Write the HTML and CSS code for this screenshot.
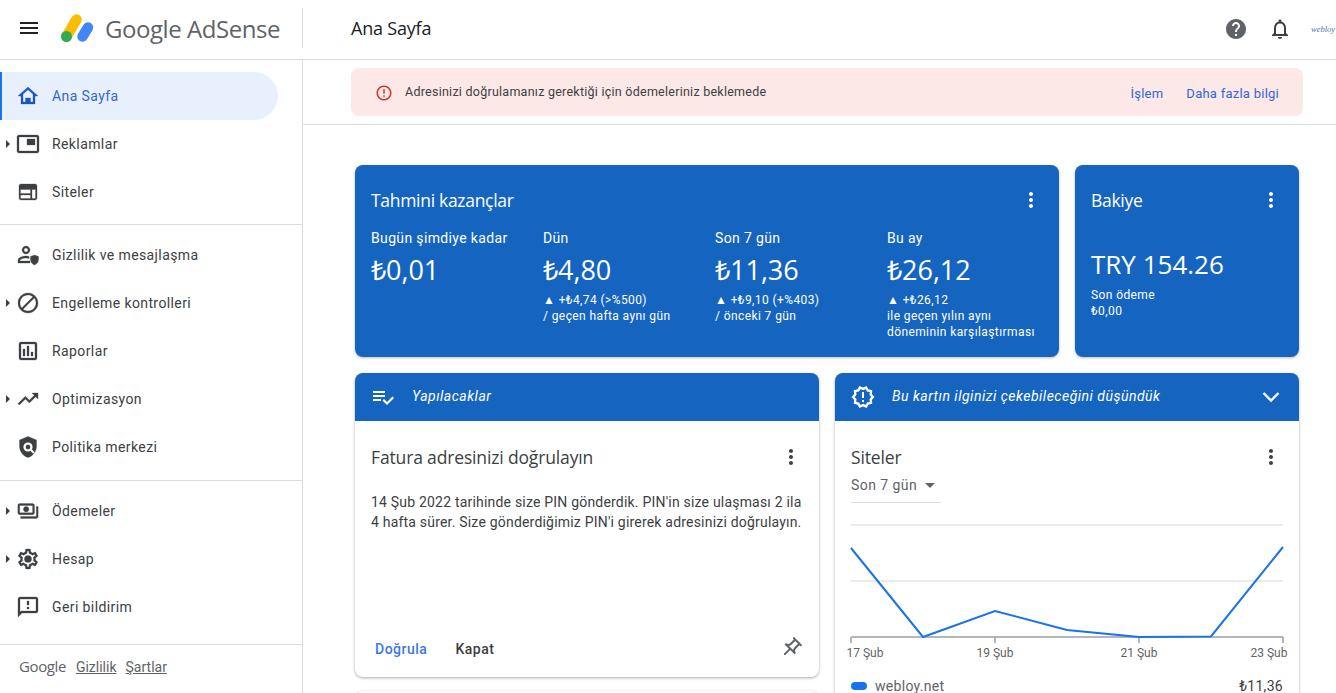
FILE: index.html
```html
<!DOCTYPE html>
<html lang="tr">
<head>
    <meta charset="UTF-8">
    <meta name="viewport" content="width=device-width, initial-scale=1.0">
    <title>Google AdSense</title>
    <link rel="stylesheet" href="styles.css">
</head>
<body>
    <header class="topbar">
        <div class="brand">
            <svg class="icon menu-icon" viewBox="0 0 24 24"><path d="M3 18h18v-2H3v2zm0-5h18v-2H3v2zm0-7v2h18V6H3z"/></svg>
            <svg class="logo" viewBox="58 8 38 36" width="38" height="36">
                <path d="M66.500 34.500 L76.500 17.500" stroke="#fbbc04" stroke-width="10.500" stroke-linecap="round" fill="none"/>
                <path d="M82.500 34.500 L88 25.500" stroke="#4285f4" stroke-width="10.500" stroke-linecap="round" fill="none"/>
                <circle cx="66.500" cy="34.500" r="5.500" fill="#34a853"/>
            </svg>
            <span class="brand-name">Google AdSense</span>
        </div>
        <div class="page-title">Ana Sayfa</div>
        <div class="top-actions">
            <svg class="icon help-icon" viewBox="0 0 24 24"><path d="M12 2C6.48 2 2 6.48 2 12s4.48 10 10 10 10-4.48 10-10S17.52 2 12 2zm1 17h-2v-2h2v2zm2.07-7.75l-.9.92C13.45 12.9 13 13.5 13 15h-2v-.5c0-1.1.45-2.1 1.17-2.83l1.24-1.26c.37-.36.59-.86.59-1.41 0-1.1-.9-2-2-2s-2 .9-2 2H8c0-2.21 1.79-4 4-4s4 1.79 4 4c0 .88-.36 1.68-.93 2.25z"/></svg>
            <svg class="icon bell-icon" viewBox="0 0 24 24"><path d="M12 22c1.1 0 2-.9 2-2h-4c0 1.1.89 2 2 2zm6-6v-5c0-3.07-1.64-5.64-4.5-6.32V4c0-.83-.67-1.5-1.5-1.5s-1.5.67-1.5 1.5v.68C7.63 5.36 6 7.92 6 11v5l-2 2v1h16v-1l-2-2zm-2 1H8v-6c0-2.48 1.51-4.5 4-4.5s4 2.02 4 4.5v6z"/></svg>
            <span class="avatar">webloy</span>
        </div>
    </header>

    <div class="layout">
        <nav class="sidebar">
            <div class="nav-group first">
                <a class="nav-item active">
                    <svg class="icon" viewBox="0 0 24 24"><path d="M12 5.69l5 4.5V18H7v-7.81l5-4.5M12 3L2 12h3v8h14v-8h3L12 3z"/><path d="M9.500 14h5v4h-5z"/></svg>
                    Ana Sayfa
                </a>
                <a class="nav-item has-arrow">
                    <svg class="icon" viewBox="0 0 24 24"><path d="M19 7h-8v6h8V7zm2-4H3c-1.1 0-2 .9-2 2v14c0 1.1.9 1.98 2 1.98h18c1.1 0 2-.88 2-1.98V5c0-1.1-.9-2-2-2zm0 16.01H3V4.98h18v14.03z"/></svg>
                    Reklamlar
                </a>
                <a class="nav-item">
                    <svg class="icon" viewBox="0 0 24 24"><path fill-rule="evenodd" d="M19 4H5c-1.100 0-2 .9-2 2v12c0 1.100.9 2 2 2h14c1.100 0 2-.9 2-2V6c0-1.100-.9-2-2-2zM14.500 18.500h-10V15h10zM14.500 13.500h-10V9.500h10zM19.500 18.500H16V9.500h3.500z"/></svg>
                    Siteler
                </a>
            </div>
            <div class="nav-group">
                <a class="nav-item">
                    <svg class="icon" viewBox="0 0 24 24"><path d="M10 11c2.210 0 4-1.790 4-4s-1.790-4-4-4-4 1.790-4 4 1.790 4 4 4zm0-6c1.100 0 2 .9 2 2s-.9 2-2 2-2-.9-2-2 .9-2 2-2zM2 20v-3c0-2.660 5.330-4 8-4 .9 0 2 .15 3.100.43v2.070C12 15.200 11 15 10 15c-2.970 0-5.800 1.460-6 2.010V18h10v2H2z"/><path d="M18.500 12l-4 1.600v3c0 2.500 1.700 4.700 4 5.400 2.300-.7 4-2.900 4-5.400v-3z"/></svg>
                    Gizlilik ve mesajlaşma
                </a>
                <a class="nav-item has-arrow">
                    <svg class="icon" viewBox="0 0 24 24"><path d="M12 2C6.48 2 2 6.48 2 12s4.48 10 10 10 10-4.48 10-10S17.52 2 12 2zM4 12c0-4.42 3.58-8 8-8 1.85 0 3.55.63 4.9 1.69L5.69 16.9C4.63 15.55 4 13.85 4 12zm8 8c-1.85 0-3.55-.63-4.9-1.69L18.31 7.1C19.37 8.45 20 10.15 20 12c0 4.42-3.58 8-8 8z"/></svg>
                    Engelleme kontrolleri
                </a>
                <a class="nav-item">
                    <svg class="icon" viewBox="0 0 24 24"><path d="M19 3H5c-1.1 0-2 .9-2 2v14c0 1.1.9 2 2 2h14c1.1 0 2-.9 2-2V5c0-1.1-.9-2-2-2zm0 16H5V5h14v14zM7 10h2v7H7zm4-3h2v10h-2zm4 6h2v4h-2z"/></svg>
                    Raporlar
                </a>
                <a class="nav-item has-arrow">
                    <svg class="icon" viewBox="0 0 24 24"><path d="M16 6l2.290 2.290-4.880 4.880-4-4L2 16.590 3.410 18l6-6 4 4 6.300-6.290L22 12V6z"/></svg>
                    Optimizasyon
                </a>
                <a class="nav-item">
                    <svg class="icon" viewBox="0 0 24 24"><path d="M12 1.500L3.500 5v6.200c0 5.200 3.600 10 8.500 11.300 4.900-1.300 8.500-6.100 8.500-11.300V5z"/><circle cx="12" cy="12" r="4.600" fill="#fff" stroke="none"/><circle cx="12" cy="12" r="2.200"/><path d="M15 15l3 3" stroke="#fff" stroke-width="2"/></svg>
                    Politika merkezi
                </a>
            </div>
            <div class="nav-group last">
                <a class="nav-item has-arrow">
                    <svg class="icon" viewBox="-1 -1 26 26"><path d="M19 14V6c0-1.100-.9-2-2-2H3c-1.100 0-2 .9-2 2v8c0 1.100.9 2 2 2h14c1.100 0 2-.9 2-2zm-2 0H3V6h14v8zm-7-7c-1.660 0-3 1.340-3 3s1.340 3 3 3 3-1.340 3-3-1.340-3-3-3zm13 0v11c0 1.100-.9 2-2 2H4v-2h17V7h2z"/></svg>
                    Ödemeler
                </a>
                <a class="nav-item has-arrow">
                    <svg class="icon" viewBox="0 0 24 24"><path d="M19.430 12.980c.04-.32.07-.64.07-.98 0-.34-.03-.66-.07-.98l2.110-1.650c.19-.15.24-.42.12-.64l-2-3.460c-.09-.16-.26-.25-.44-.25-.06 0-.12.01-.17.03l-2.490 1c-.52-.4-1.080-.73-1.690-.98l-.38-2.650C14.460 2.180 14.250 2 14 2h-4c-.25 0-.46.18-.49.42l-.38 2.650c-.61.25-1.170.59-1.690.98l-2.490-1c-.06-.02-.12-.03-.18-.03-.17 0-.34.09-.43.25l-2 3.460c-.13.22-.07.49.12.64l2.110 1.650c-.04.32-.07.65-.07.98 0 .33.03.66.07.98l-2.110 1.650c-.19.15-.24.42-.12.64l2 3.460c.09.16.26.25.44.25.06 0 .12-.01.17-.03l2.490-1c.52.4 1.080.73 1.690.98l.38 2.650c.03.24.24.42.49.42h4c.25 0 .46-.18.49-.42l.38-2.650c.61-.25 1.170-.59 1.690-.98l2.490 1c.06.02.12.03.18.03.17 0 .34-.09.43-.25l2-3.460c.12-.22.07-.49-.12-.64l-2.110-1.650zm-1.980-1.710c.04.31.05.52.05.73 0 .21-.02.43-.05.73l-.14 1.130.89.7 1.080.84-.7 1.210-1.270-.51-1.040-.42-.9.68c-.43.32-.84.56-1.250.73l-1.060.43-.16 1.130-.2 1.350h-1.400l-.19-1.350-.16-1.130-1.060-.43c-.43-.18-.83-.41-1.230-.71l-.91-.7-1.060.43-1.270.51-.7-1.210 1.080-.84.89-.7-.14-1.130c-.03-.31-.05-.54-.05-.74s.02-.43.05-.73l.14-1.130-.89-.7-1.080-.84.7-1.210 1.270.51 1.040.42.9-.68c.43-.32.84-.56 1.250-.73l1.060-.43.16-1.130.2-1.350h1.390l.19 1.350.16 1.130 1.060.43c.43.18.83.41 1.230.71l.91.7 1.060-.43 1.270-.51.7 1.210-1.070.85-.89.7.14 1.130z"/><circle cx="12" cy="12" r="3.600"/></svg>
                    Hesap
                </a>
                <a class="nav-item">
                    <svg class="icon" viewBox="0 0 24 24"><path d="M20 2H4c-1.100 0-1.990.9-1.990 2L2 22l4-4h14c1.100 0 2-.9 2-2V4c0-1.100-.9-2-2-2zm0 14H5.170l-.59.59-.58.58V4h16v12zm-9-4h2v2h-2zm0-6h2v4h-2z"/></svg>
                    Geri bildirim
                </a>
            </div>
            <div class="side-footer">
                <span class="footer-google">Google</span>
                <a>Gizlilik</a>
                <a>Şartlar</a>
            </div>
        </nav>

        <main class="content">
            <div class="banner-wrap">
                <div class="banner">
                    <svg class="icon error-icon" viewBox="0 0 24 24"><path d="M11 15h2v2h-2zm0-8h2v6h-2zm.99-5C6.470 2 2 6.480 2 12s4.470 10 9.990 10C17.520 22 22 17.520 22 12S17.520 2 11.990 2zM12 20c-4.420 0-8-3.580-8-8s3.580-8 8-8 8 3.580 8 8-3.580 8-8 8z"/></svg>
                    <span class="banner-text">Adresinizi doğrulamanız gerektiği için ödemeleriniz beklemede</span>
                    <a class="banner-link">İşlem</a>
                    <a class="banner-link">Daha fazla bilgi</a>
                </div>
            </div>

            <div class="dashboard">
                <section class="blue-row">
                    <div class="card-blue">
                        <div class="blue-head">
                            <h2>Tahmini kazançlar</h2>
                            <svg class="icon dots-white" viewBox="0 0 24 24"><path d="M12 8c1.100 0 2-.9 2-2s-.9-2-2-2-2 .9-2 2 .9 2 2 2zm0 2c-1.100 0-2 .9-2 2s.9 2 2 2 2-.9 2-2-.9-2-2-2zm0 6c-1.100 0-2 .9-2 2s.9 2 2 2 2-.9 2-2-.9-2-2-2z"/></svg>
                        </div>
                        <div class="stats">
                            <div class="stat">
                                <div class="stat-label">Bugün şimdiye kadar</div>
                                <div class="stat-value">₺0,01</div>
                            </div>
                            <div class="stat">
                                <div class="stat-label">Dün</div>
                                <div class="stat-value">₺4,80</div>
                                <div class="stat-note">▲ +₺4,74 (&gt;%500)<br>/ geçen hafta aynı gün</div>
                            </div>
                            <div class="stat">
                                <div class="stat-label">Son 7 gün</div>
                                <div class="stat-value">₺11,36</div>
                                <div class="stat-note">▲ +₺9,10 (+%403)<br>/ önceki 7 gün</div>
                            </div>
                            <div class="stat">
                                <div class="stat-label">Bu ay</div>
                                <div class="stat-value">₺26,12</div>
                                <div class="stat-note">▲ +₺26,12<br>ile geçen yılın aynı<br>döneminin karşılaştırması</div>
                            </div>
                        </div>
                    </div>
                    <div class="card-blue">
                        <div class="blue-head">
                            <h2>Bakiye</h2>
                            <svg class="icon dots-white" viewBox="0 0 24 24"><path d="M12 8c1.100 0 2-.9 2-2s-.9-2-2-2-2 .9-2 2 .9 2 2 2zm0 2c-1.100 0-2 .9-2 2s.9 2 2 2 2-.9 2-2-.9-2-2-2zm0 6c-1.100 0-2 .9-2 2s.9 2 2 2 2-.9 2-2-.9-2-2-2z"/></svg>
                        </div>
                        <div class="balance">TRY 154.26</div>
                        <div class="stat-note">Son ödeme<br>₺0,00</div>
                    </div>
                </section>

                <section class="card-row">
                    <div class="column">
                        <div class="card">
                            <div class="card-strip">
                                <svg class="icon strip-icon" viewBox="0 0 24 24"><path d="M14 10H2v2h12v-2zm0-4H2v2h12V6zM2 16h8v-2H2v2zm19.500-4.500L23 13l-6.990 7-4.510-4.500L13 14l3.010 3 5.490-5.500z"/></svg>
                                <span>Yapılacaklar</span>
                            </div>
                            <div class="task-body">
                                <div class="card-head">
                                    <h3>Fatura adresinizi doğrulayın</h3>
                                    <svg class="icon dots" viewBox="0 0 24 24"><path d="M12 8c1.100 0 2-.9 2-2s-.9-2-2-2-2 .9-2 2 .9 2 2 2zm0 2c-1.100 0-2 .9-2 2s.9 2 2 2 2-.9 2-2-.9-2-2-2zm0 6c-1.100 0-2 .9-2 2s.9 2 2 2 2-.9 2-2-.9-2-2-2z"/></svg>
                                </div>
                                <p class="task-text">14 Şub 2022 tarihinde size PIN gönderdik. PIN'in size ulaşması 2 ila 4 hafta sürer. Size gönderdiğimiz PIN'i girerek adresinizi doğrulayın.</p>
                                <div class="task-actions">
                                    <a class="btn-primary">Doğrula</a>
                                    <a class="btn-plain">Kapat</a>
                                    <svg class="icon pin" viewBox="0 0 24 24"><path transform="rotate(45 12 12)" d="M14 4v5c0 1.120.37 2.160 1 3H9c.65-.86 1-1.900 1-3V4h4m3-2H7c-.55 0-1 .45-1 1s.45 1 1 1h1v5c0 1.660-1.340 3-3 3v2h5.970v7l1 1 1-1v-7H19v-2c-1.660 0-3-1.340-3-3V4h1c.55 0 1-.45 1-1s-.45-1-1-1z"/></svg>
                                </div>
                            </div>
                        </div>
                        <div class="card next-card"></div>
                    </div>
                    <div class="column">
                        <div class="card">
                            <div class="card-strip">
                                <svg class="icon strip-icon" viewBox="0 0 24 24"><path fill="none" stroke="#fff" stroke-width="2.600" transform="translate(1.200 1.200) scale(.9)" d="M23 12l-2.440-2.790.34-3.690-3.610-.82-1.890-3.200L12 2.960 8.600 1.500 6.710 4.690 3.100 5.500l.34 3.700L1 12l2.440 2.790-.34 3.700 3.610.82L8.600 22.500l3.400-1.470 3.400 1.460 1.890-3.190 3.610-.82-.34-3.690L23 12z"/><path d="M11 7h2v6h-2zm0 8h2v2h-2z"/></svg>
                                <span>Bu kartın ilginizi çekebileceğini düşündük</span>
                                <svg class="chevron" viewBox="0 0 24 24"><path d="M4.500 8l7.500 7.500L19.500 8" fill="none" stroke="#fff" stroke-width="2.400"/></svg>
                            </div>
                            <div class="sites-body">
                                <div class="card-head">
                                    <h3>Siteler</h3>
                                    <svg class="icon dots" viewBox="0 0 24 24"><path d="M12 8c1.100 0 2-.9 2-2s-.9-2-2-2-2 .9-2 2 .9 2 2 2zm0 2c-1.100 0-2 .9-2 2s.9 2 2 2 2-.9 2-2-.9-2-2-2zm0 6c-1.100 0-2 .9-2 2s.9 2 2 2 2-.9 2-2-.9-2-2-2z"/></svg>
                                </div>
                                <div class="range-select">Son 7 gün <i class="caret"></i></div>
                                <svg class="chart" viewBox="0 0 448 140" width="448" height="140">
                                    <g stroke="#ebebeb" stroke-width="2">
                                        <path d="M8 1H440"/>
                                        <path d="M8 57H440"/>
                                    </g>
                                    <path d="M8 113H440M8 113v6M152 113v6M296 113v6M440 113v6" stroke="#9aa0a6" stroke-width="1.500" fill="none"/>
                                    <polyline points="8,24 80,113 152,87 224,106 296,113 368,112.500 440,23" fill="none" stroke="#1a73e8" stroke-width="2"/>
                                    <g class="chart-label">
                                        <text x="22" y="133" text-anchor="middle">17 Şub</text>
                                        <text x="152" y="133" text-anchor="middle">19 Şub</text>
                                        <text x="296" y="133" text-anchor="middle">21 Şub</text>
                                        <text x="426" y="133" text-anchor="middle">23 Şub</text>
                                    </g>
                                </svg>
                                <div class="legend">
                                    <i class="legend-dot"></i>
                                    <span class="legend-name">webloy.net</span>
                                    <span class="legend-value">₺11,36</span>
                                </div>
                            </div>
                        </div>
                    </div>
                </section>
            </div>
        </main>
    </div>
</body>
</html>
```

FILE: styles.css
```css
:root {
    --blue: #1565c0;
    --link: #1a73e8;
    --text: #3c4043;
    --grey: #5f6368;
    --line: #dadce0;
}

* {
    box-sizing: border-box;
}

html, body {
    height: 100%;
}

body {
    margin: 0;
    overflow: hidden;
    background: #fff;
    color: var(--text);
    font-family: Roboto, "Noto Sans", sans-serif;
    font-size: 14px;
}

h2, h3, p {
    margin: 0;
    font-weight: 400;
}

.icon {
    width: 24px;
    height: 24px;
    flex: none;
    fill: #3c4043;
}

/* top bar */
.topbar {
    height: 60px;
    display: flex;
    align-items: center;
    border-bottom: 1px solid var(--line);
}

.brand {
    width: 303px;
    height: 40px;
    margin-top: -3px;
    display: flex;
    align-items: center;
    border-right: 1px solid var(--line);
    padding-left: 17px;
}

.menu-icon {
    fill: #202124;
}

.logo {
    margin-left: 17px;
    margin-right: 9px;
    flex: none;
}

.brand-name {
    font-family: "Open Sans", sans-serif;
    font-size: 24px;
    color: var(--grey);
    letter-spacing: -0.45px;
}

.page-title {
    margin-left: 48px;
    font-family: "Open Sans", sans-serif;
    font-size: 18px;
    color: #202124;
    letter-spacing: -0.2px;
    margin-top: -4px;
}

.top-actions {
    margin-left: auto;
    display: flex;
    align-items: center;
    margin-top: -2px;
}

.help-icon {
    fill: #5f6368;
}

.bell-icon {
    fill: #3c4043;
    margin-left: 20px;
}

.avatar {
    width: 25px;
    margin-left: 19px;
    white-space: nowrap;
    font-family: "Liberation Serif", serif;
    font-style: italic;
    font-size: 8.500px;
    color: #3f78b5;
}

/* layout */
.layout {
    height: calc(100vh - 60px);
    display: grid;
    grid-template-columns: 303px minmax(0, 1fr);
}

.sidebar {
    border-right: 1px solid var(--line);
}

.sidebar .icon {
    stroke: #3c4043;
    stroke-width: 0.3;
}

.nav-group {
    padding: 6px 0 9px;
    border-top: 1px solid var(--line);
}

.nav-group.first {
    border-top: none;
    padding: 12px 0 8px;
}

.nav-group.last {
    padding-bottom: 13px;
}

.nav-item {
    height: 48px;
    width: 278px;
    padding-left: 16px;
    display: flex;
    align-items: center;
    gap: 12px;
    position: relative;
    letter-spacing: 0.4px;
    color: var(--text);
}

.nav-item.active {
    background: #e8f0fe;
    border-left: 2px solid var(--link);
    padding-left: 14px;
    border-radius: 0 24px 24px 0;
    color: #3367d6;
}

.sidebar .nav-item.active .icon {
    fill: #1a56c4;
    stroke: #1a56c4;
}

.nav-item.has-arrow::before {
    content: "";
    position: absolute;
    left: 6px;
    top: 20px;
    border-left: 4px solid #3c4043;
    border-top: 4px solid transparent;
    border-bottom: 4px solid transparent;
}

.side-footer {
    border-top: 1px solid var(--line);
    padding: 13px 0 0 19px;
    display: flex;
    align-items: center;
    gap: 9px;
}

.footer-google {
    font-family: "Open Sans", sans-serif;
    color: var(--grey);
    font-size: 15px;
    letter-spacing: -0.4px;
    margin-right: 1px;
    margin-top: -2px;
}

.side-footer a {
    color: var(--grey);
    text-decoration: underline;
}

/* banner */
.banner-wrap {
    padding: 8px 33px 8px 48px;
    border-bottom: 1px solid var(--line);
}

.banner {
    height: 48px;
    padding: 0 24px;
    display: flex;
    align-items: center;
    background: #fce8e6;
    border-radius: 8px;
}

.error-icon {
    width: 18px;
    height: 18px;
    fill: #d93025;
    margin-right: 12px;
    margin-top: 1px;
}

.banner-text {
    flex: 1;
    font-size: 12.500px;
    color: var(--text);
    letter-spacing: 0.25px;
    margin-top: -2px;
}

.banner-link {
    color: #3367d6;
    font-size: 13px;
    margin-left: 23px;
    letter-spacing: 0.25px;
    margin-top: 3px;
}

/* cards */
.dashboard {
    padding: 40px 37px 0 52px;
}

.blue-row {
    display: grid;
    grid-template-columns: minmax(0, 1fr) 224px;
    gap: 16px;
    margin-bottom: 16px;
}

.card-blue {
    height: 192px;
    padding: 23px 16px 0;
    background: var(--blue);
    border-radius: 8px;
    color: #fff;
    box-shadow: 0 1px 3px rgba(60, 64, 67, 0.35);
}

.blue-head {
    display: flex;
    align-items: center;
    justify-content: space-between;
}

.blue-head h2 {
    font-family: "Open Sans", sans-serif;
    font-size: 17.500px;
    letter-spacing: -0.3px;
}

.dots-white {
    fill: #fff;
}

.stats {
    margin-top: 16px;
    display: grid;
    grid-template-columns: repeat(3, 172px) 1fr;
}

.stat-label {
    font-size: 14px;
    line-height: 20px;
    letter-spacing: 0.35px;
}

.stat-value {
    font-family: "Open Sans", sans-serif;
    font-size: 27px;
    line-height: 32px;
    margin-top: 6px;
}

.stat-note {
    margin-top: 5px;
    font-size: 12px;
    line-height: 16px;
    letter-spacing: 0.4px;
}

.stat .stat-note {
    margin-top: 6px;
}

.balance {
    font-family: "Open Sans", sans-serif;
    font-size: 26px;
    line-height: 36px;
    margin-top: 34px;
}

.card-row {
    display: grid;
    grid-template-columns: repeat(2, minmax(0, 1fr));
    gap: 16px;
}

.card {
    background: #fff;
    border-radius: 8px;
    overflow: hidden;
    box-shadow: 0 1px 3px rgba(60, 64, 67, 0.45);
}

.next-card {
    height: 40px;
    margin-top: 14px;
}

.card-strip {
    height: 48px;
    padding: 0 16px;
    display: flex;
    align-items: center;
    gap: 17px;
    background: var(--blue);
    color: #fff;
    font-size: 14px;
    font-style: italic;
    letter-spacing: 0.5px;
}

.card-strip span {
    margin-top: -2px;
}

.strip-icon {
    fill: #fff;
}

.chevron {
    width: 24px;
    height: 24px;
    margin-left: auto;
}

.task-body {
    height: 256px;
    padding: 24px 16px 0;
    display: flex;
    flex-direction: column;
}

.sites-body {
    padding: 24px 16px 0;
    min-height: 320px;
}

.card-head {
    display: flex;
    align-items: center;
    justify-content: space-between;
    height: 24px;
}

.card-head h3 {
    font-family: "Open Sans", sans-serif;
    font-size: 17.500px;
    color: var(--text);
    letter-spacing: -0.15px;
    margin-top: -1px;
}

.task-text {
    margin-top: 23px;
    font-size: 14px;
    line-height: 20px;
    letter-spacing: 0.2px;
    color: var(--text);
}

.task-actions {
    margin-top: auto;
    height: 56px;
    display: flex;
    align-items: center;
    padding-left: 4px;
    gap: 28px;
    font-weight: 500;
    letter-spacing: 0.5px;
}

.btn-primary {
    color: #3b78e7;
}

.btn-plain {
    color: var(--text);
}

.pin {
    fill: #5f6368;
    margin-left: auto;
    margin-top: -2px;
}

.range-select {
    width: 90px;
    height: 28px;
    margin-top: 6px;
    border-bottom: 1px solid var(--line);
    color: var(--grey);
    letter-spacing: 0.45px;
    display: flex;
    align-items: flex-start;
    line-height: 20px;
}

.caret {
    margin: 8px 0 0 8px;
    border-top: 5px solid var(--grey);
    border-left: 5px solid transparent;
    border-right: 5px solid transparent;
}

.chart {
    display: block;
    margin: 21px 0 0 -8px;
}

.chart-label text {
    font-family: Roboto, sans-serif;
    font-size: 12px;
    fill: var(--grey);
}

.legend {
    display: flex;
    align-items: center;
    margin-top: 14px;
    font-size: 14px;
    color: var(--grey);
    letter-spacing: 0.3px;
}

.legend-dot {
    width: 16px;
    height: 8px;
    border-radius: 4px;
    background: var(--link);
    margin-right: 8px;
}

.legend-value {
    margin-left: auto;
    color: var(--text);
}
```
